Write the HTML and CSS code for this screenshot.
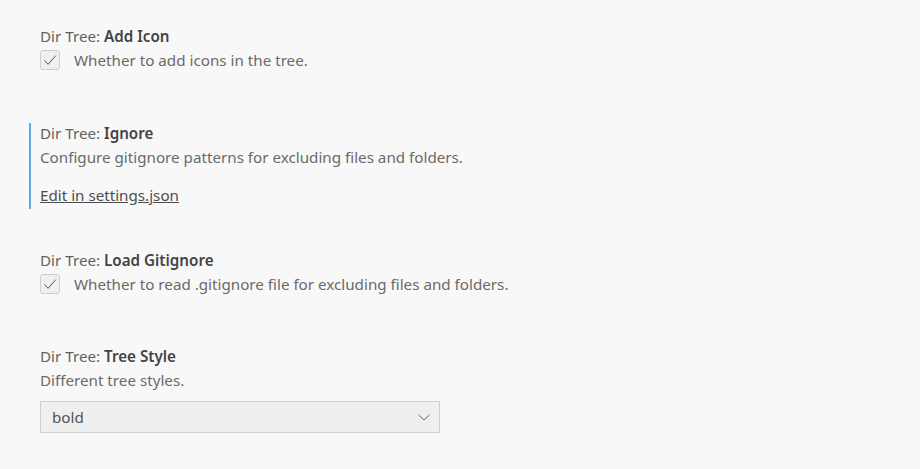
FILE: index.html
```html
<!DOCTYPE html>
<html>
<head>
<meta charset="utf-8">
<link rel="stylesheet" href="styles.css">
</head>
<body>
<div class="list">
  <div class="setting gap-1">
    <div class="title"><span class="cat">Dir Tree: </span><span class="label">Add Icon</span></div>
    <div class="bool-row">
      <span class="checkbox"><svg width="18" height="18" viewBox="0 0 18 18"><path d="M3.4 9.4 L7.1 13.3 L14.8 4.6" fill="none" stroke="#555" stroke-width="1"/></svg></span>
      <span class="desc">Whether to add icons in the tree.</span>
    </div>
  </div>
  <div class="setting focused gap-2">
    <div class="title"><span class="cat">Dir Tree: </span><span class="label">Ignore</span></div>
    <div class="desc desc-block">Configure gitignore patterns for excluding files and folders.</div>
    <a class="edit-link" href="#">Edit in settings.json</a>
  </div>
  <div class="setting gap-3">
    <div class="title"><span class="cat">Dir Tree: </span><span class="label">Load Gitignore</span></div>
    <div class="bool-row">
      <span class="checkbox"><svg width="18" height="18" viewBox="0 0 18 18"><path d="M3.4 9.4 L7.1 13.3 L14.8 4.6" fill="none" stroke="#555" stroke-width="1"/></svg></span>
      <span class="desc">Whether to read .gitignore file for excluding files and folders.</span>
    </div>
  </div>
  <div class="setting">
    <div class="title"><span class="cat">Dir Tree: </span><span class="label">Tree Style</span></div>
    <div class="desc desc-block">Different tree styles.</div>
    <div class="select">
      <span class="select-value">bold</span>
      <svg class="chev" width="12" height="7" viewBox="0 0 12 7"><path d="M0.5 0.8 L6 6 L11.5 0.8" fill="none" stroke="#666" stroke-width="1"/></svg>
    </div>
  </div>
</div>
</body>
</html>
```
FILE: styles.css
```css
html, body {
  margin: 0;
  padding: 0;
  background: #f8f8f8;
}
body {
  font-family: "Noto Sans", "Open Sans", sans-serif;
  font-size: 15.2px;
  color: #616161;
  width: 920px;
  height: 469px;
  overflow: hidden;
}
.list {
  display: flex;
  flex-direction: column;
  padding: 26px 0 0 29px;
}
.setting {
  border-left: 2px solid transparent;
  padding-left: 9px;
  display: flex;
  flex-direction: column;
  align-items: flex-start;
}
.gap-1 { margin-bottom: 53px; }
.gap-2 { margin-bottom: 41px; }
.gap-3 { margin-bottom: 52px; }
.setting.focused {
  border-left-color: #5ea9e2;
  padding-bottom: 4px;
}
.title {
  line-height: 20px;
  height: 20px;
  white-space: nowrap;
}
.cat { color: #616161; }
.label { color: #444444; font-weight: 600; }
.desc {
  color: #6a6a6a;
  line-height: 20px;
  white-space: nowrap;
}
.desc-block { margin-top: 4px; }
.bool-row {
  display: flex;
  align-items: center;
  margin-top: 4px;
  height: 20px;
}
.checkbox {
  width: 20px;
  height: 20px;
  box-sizing: border-box;
  border: 1px solid #cecece;
  border-radius: 3px;
  background: #efefef;
  display: flex;
  align-items: center;
  justify-content: center;
  margin-right: 14px;
}
.edit-link {
  margin-top: 18px;
  line-height: 20px;
  color: #4d4d4d;
  text-decoration: underline;
}
.select {
  margin-top: 11px;
  width: 400px;
  height: 32px;
  box-sizing: border-box;
  border: 1px solid #cecece;
  background: #efefef;
  display: flex;
  align-items: center;
  justify-content: space-between;
  padding: 0 9px 0 11px;
  color: #555;
}
```
